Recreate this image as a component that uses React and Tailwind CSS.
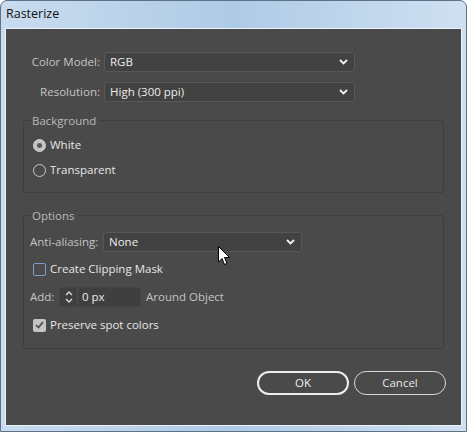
import { useState } from "react";

const font = { fontFamily: "'Open Sans', 'Noto Sans', sans-serif" };

const Chevron = () => (
  <svg width="9" height="6" viewBox="0 0 9 6" className="shrink-0">
    <path d="M1 1 L4.5 4.5 L8 1" fill="none" stroke="#f2f2f2" strokeWidth="1.8" />
  </svg>
);

const Select = ({ value, width }) => (
  <div
    className={`h-[20px] ${width} flex items-center justify-between pl-[5px] pr-[6px] rounded-[3px] bg-[#424242] border border-[#585858] text-[#ececec]`}
  >
    <span>{value}</span>
    <Chevron />
  </div>
);

const Radio = ({ checked, label }) => (
  <div className="flex items-center h-[16px] pl-[9px]">
    <div
      className={`w-[13px] h-[13px] rounded-full flex items-center justify-center ${
        checked ? "bg-[#c4c4c4] border border-[#d0d0d0]" : "border border-[#c8c8c8]"
      }`}
    >
      {checked && <div className="w-[5px] h-[5px] rounded-full bg-[#5a5a5a]" />}
    </div>
    <span className="ml-[4px] text-[#e6e6e6]">{label}</span>
  </div>
);

const Checkbox = ({ checked, label }) => (
  <div className="flex items-center h-[16px] pl-[9px]">
    <div
      className={`w-[13px] h-[13px] rounded-[2px] flex items-center justify-center ${
        checked ? "bg-[#c4c4c4]" : "border border-[#7d9fca]"
      }`}
    >
      {checked && (
        <svg width="9" height="8" viewBox="0 0 9 8">
          <path d="M1 4 L3.5 6.5 L8 1" fill="none" stroke="#4a4a4a" strokeWidth="1.7" />
        </svg>
      )}
    </div>
    <span className="ml-[4px] text-[#e6e6e6]">{label}</span>
  </div>
);

const Group = ({ title, children }) => (
  <fieldset className="mx-[17px] border border-[#3f3f3f] rounded-[2px] px-[0px]">
    <legend className="ml-[8px] px-[0px] leading-[15px] text-[#b9b9b9] pr-[4px]">{title}</legend>
    {children}
  </fieldset>
);

export default function App() {
  const [bg, setBg] = useState("white");

  return (
    <div
      className="w-[467px] h-[432px] relative overflow-hidden rounded-t-[7px] border border-[#5d7189] bg-gradient-to-r from-[#c9dcef] via-[#aecbe6] to-[#cfe0f1] text-[11.5px]"
      style={font}
    >
      {/* title bar */}
      <div className="h-[27px] flex items-center pl-[5px] text-[#111] text-[12.5px]">Rasterize</div>

      {/* client area */}
      <div className="mx-[4px] h-[398px] bg-[#4a4a4a] border border-[#e9f1f9] flex flex-col">
        <div className="flex items-center mt-[23px]">
          <div className="w-[94px] text-right text-[#c4c4c4]">Color Model:</div>
          <div className="ml-[4px]">
            <Select value="RGB" width="w-[251px]" />
          </div>
        </div>
        <div className="flex items-center mt-[10px]">
          <div className="w-[94px] text-right text-[#c4c4c4]">Resolution:</div>
          <div className="ml-[4px]">
            <Select value="High (300 ppi)" width="w-[251px]" />
          </div>
        </div>

        <div className="mt-[11px]">
          <Group title="Background">
            <div className="flex flex-col gap-[9px] pt-[9px] pb-[14px]">
              <div onClick={() => setBg("white")}>
                <Radio checked={bg === "white"} label="White" />
              </div>
              <div onClick={() => setBg("transparent")}>
                <Radio checked={bg === "transparent"} label="Transparent" />
              </div>
            </div>
          </Group>
        </div>

        <div className="mt-[15px]">
          <Group title="Options">
            <div className="flex flex-col pt-[9px] pb-[15px] pl-[6px]">
              <div className="flex items-center">
                <span className="w-[69px] text-[#c4c4c4] whitespace-nowrap">Anti-aliasing:</span>
                <div className="ml-[4px]">
                  <Select value="None" width="w-[199px]" />
                </div>
              </div>
              <div className="mt-[9px] -ml-[6px]">
                <Checkbox label="Create Clipping Mask" />
              </div>
              <div className="mt-[10px] flex items-center">
                <span className="w-[24px] text-[#c4c4c4]">Add:</span>
                <div className="ml-[5px] flex h-[20px] rounded-[3px] bg-[#3f3f3f] border border-[#444]">
                  <div className="w-[18px] flex items-center justify-center border-r border-[#4d4d4d]">
                    <svg width="8" height="14" viewBox="0 0 8 14">
                      <path d="M1 5 L4 2 L7 5 M1 9 L4 12 L7 9" fill="none" stroke="#e0e0e0" strokeWidth="1.3" />
                    </svg>
                  </div>
                  <div className="w-[62px] flex items-center pl-[4px] text-[#ececec]">0 px</div>
                </div>
                <span className="ml-[5px] text-[#c4c4c4]">Around Object</span>
              </div>
              <div className="mt-[10px] -ml-[6px]">
                <Checkbox checked label="Preserve spot colors" />
              </div>
            </div>
          </Group>
        </div>

        <div className="flex justify-end gap-[5px] mt-[22px] pr-[15px]">
          <button className="w-[92px] h-[24px] rounded-full border-2 border-[#eeeeee] text-[#f0f0f0] leading-none">
            OK
          </button>
          <button className="w-[92px] h-[24px] rounded-full border-[1.5px] border-[#d8d8d8] text-[#e8e8e8] leading-none">
            Cancel
          </button>
        </div>
      </div>

      {/* mouse pointer */}
      <svg className="absolute left-[217px] top-[245px]" width="13" height="20" viewBox="0 0 13 20">
        <path
          d="M0.5 0.5 L0.5 16 L4 12.5 L6.5 18.5 L9 17.5 L6.5 11.5 L11.5 11.5 Z"
          fill="#ffffff"
          stroke="#000000"
          strokeWidth="1"
        />
      </svg>
    </div>
  );
}
